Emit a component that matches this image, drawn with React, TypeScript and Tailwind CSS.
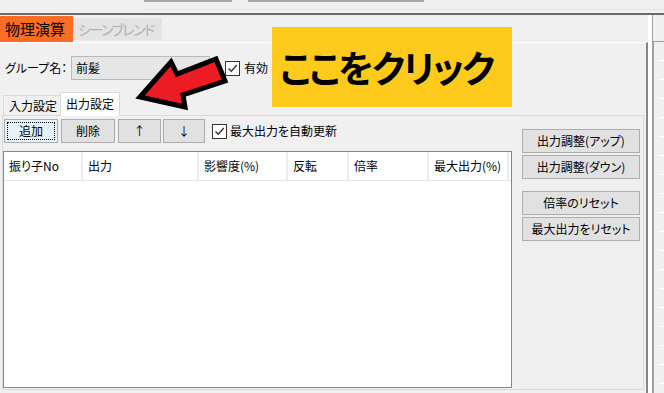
import React from 'react';

const jp = "[font-family:'Noto_Sans_CJK_JP','Noto_Sans',sans-serif] [font-feature-settings:'palt']";

const CheckBox: React.FC = () => (
  <div className="w-[15px] h-[15px] border border-[#333333] bg-white flex items-center justify-center shrink-0">
    <svg width="11" height="11" viewBox="0 0 11 11">
      <path d="M1.5 5.5 L4.3 8.3 L9.8 2" fill="none" stroke="#333333" strokeWidth="1.4" />
    </svg>
  </div>
);

const WinButton: React.FC<{ children: React.ReactNode; className?: string }> = ({ children, className }) => (
  <button className={`h-[24px] bg-[#e1e1e1] border border-[#adadad] text-[12px] leading-none text-black whitespace-nowrap flex items-center justify-center ${className ?? ''}`}>
    {children}
  </button>
);

const columns = [
  { label: '振り子No', w: 'w-[79px]' },
  { label: '出力', w: 'w-[116px]' },
  { label: '影響度(%)', w: 'w-[89px]' },
  { label: '反転', w: 'w-[61px]' },
  { label: '倍率', w: 'w-[80px]' },
  { label: '最大出力(%)', w: 'w-[80px]' },
];

const ticks = Array.from({ length: 18 });

export default function App() {
  return (
    <div className={`relative w-[664px] h-[393px] overflow-hidden bg-[#f0f0f0] text-black ${jp}`}>
      {/* remains of the window above */}
      <div className="h-[13px]">
        <div className="flex gap-[16px] pl-[144px]">
          <div className="w-[88px] h-[2px] bg-[#a6a6a6]" />
          <div className="w-[176px] h-[2px] bg-[#a6a6a6]" />
        </div>
        <div className="mt-[7px] ml-[144px] h-px bg-[#e2e2e2]" />
      </div>
      <div className="h-[2px] bg-[#6b6b6b]" />

      <div className="flex h-[378px]">
        {/* main tab control */}
        <div className="w-[648px] flex flex-col">
          <div className="h-[27px] flex items-start whitespace-nowrap">
            <div className="mt-px w-[73px] h-[26px] bg-[#fb6c24] text-[15px] leading-[26px] pl-[5px]">物理演算</div>
            <div className="mt-[3px] w-[89px] h-[22px] bg-[#e4e4e4] text-[14px] tracking-[-1.5px] leading-[22px] pl-[5px] text-[#b0b0b0] overflow-hidden">シーンブレンド</div>
          </div>
          <div className="flex-1 border-t border-white border-r-2 border-r-[#858585] flex flex-col">
            {/* group row */}
            <div className="mt-[13px] h-[24px] flex items-center text-[12px] whitespace-nowrap">
              <span className="ml-[5px] w-[66px]">グループ名：</span>
              <div className="w-[139px] h-[24px] bg-[#e6e6e6] border border-[#b9b9b9] pl-[4px] leading-[22px]">前髪</div>
              <div className="ml-[15px]"><CheckBox /></div>
              <span className="ml-[4px]">有効</span>
            </div>

            {/* sub tabs */}
            <div className="mt-[12px] h-[23px] flex items-end pl-[3px] text-[12px] whitespace-nowrap">
              <div className="w-[57px] h-[20px] border-t border-l border-[#d9d9d9] bg-[#f0f0f0] pl-[5px] leading-[19px]">入力設定</div>
              <div className="relative z-10 -mb-px w-[60px] h-[24px] border border-b-0 border-[#d9d9d9] bg-white pl-[5px] leading-[22px]">出力設定</div>
            </div>

            {/* tab page */}
            <div className="ml-[2px] w-[642px] h-[275px] border border-[#d9d9d9] flex">
              <div className="w-[509px] flex flex-col">
                <div className="mt-[3px] ml-px h-[24px] flex items-center">
                  <WinButton className="relative w-[54px] bg-[#e5f1fb] border-[#0078d7]">
                    <span className="absolute inset-[2px] border border-dotted border-black" />
                    追加
                  </WinButton>
                  <WinButton className="ml-[3px] w-[54px]">削除</WinButton>
                  <WinButton className="ml-[3px] w-[43px] text-[#c8752e]">↑</WinButton>
                  <WinButton className="ml-[2px] w-[42px] text-[#2f73c4]">↓</WinButton>
                  <div className="ml-[7px]"><CheckBox /></div>
                  <span className="ml-[3px] text-[12px] whitespace-nowrap">最大出力を自動更新</span>
                </div>
                <div className="mt-[8px] h-[237px] border border-[#828790] bg-white">
                  <div className="flex h-[29px] border-b border-[#e5e5e5] text-[12px] whitespace-nowrap">
                    {columns.map((c) => (
                      <div key={c.label} className={`${c.w} h-full border-r-2 border-[#ececec] pl-[5px] flex items-center`}>
                        {c.label}
                      </div>
                    ))}
                  </div>
                </div>
              </div>
              <div className="ml-[10px] pt-[13px] flex flex-col gap-[2px] bg-[#efefef]">
                <WinButton className="w-[118px] h-[23px]">出力調整(アップ)</WinButton>
                <WinButton className="w-[118px] h-[23px]">出力調整(ダウン)</WinButton>
                <WinButton className="mt-[10px] w-[118px] h-[23px]">倍率のリセット</WinButton>
                <WinButton className="w-[118px] h-[23px]">最大出力をリセット</WinButton>
              </div>
            </div>
          </div>
        </div>

        {/* splitter */}
        <div className="w-[4px] bg-white" />
        <div className="w-px bg-[#a0a0a0]" />

        {/* neighbouring panel */}
        <div className="flex-1 pt-[26px]">
          <div className="h-full border-t border-l border-[#a0a0a0] pt-[18px] flex flex-col gap-[18px] items-end">
            {ticks.map((_, i) => (
              <div key={i} className="w-[5px] h-px bg-white" />
            ))}
          </div>
        </div>
      </div>

      {/* annotation overlay */}
      <div className="absolute left-[272px] top-[27px] w-[240px] h-[80px] bg-[#fecb1c] flex items-center pl-[8px] text-[37px] tracking-[-2px] font-bold leading-none whitespace-nowrap">
        ここをクリック
      </div>
      <svg className="absolute left-0 top-0" width="664" height="393" viewBox="0 0 664 393">
        <polygon
          points="140,97 171,62 177,74 216,59 225,81 183,95 185,107"
          fill="#ed1c24"
          stroke="#000000"
          strokeWidth="5"
          strokeLinejoin="miter"
        />
      </svg>
    </div>
  );
}
